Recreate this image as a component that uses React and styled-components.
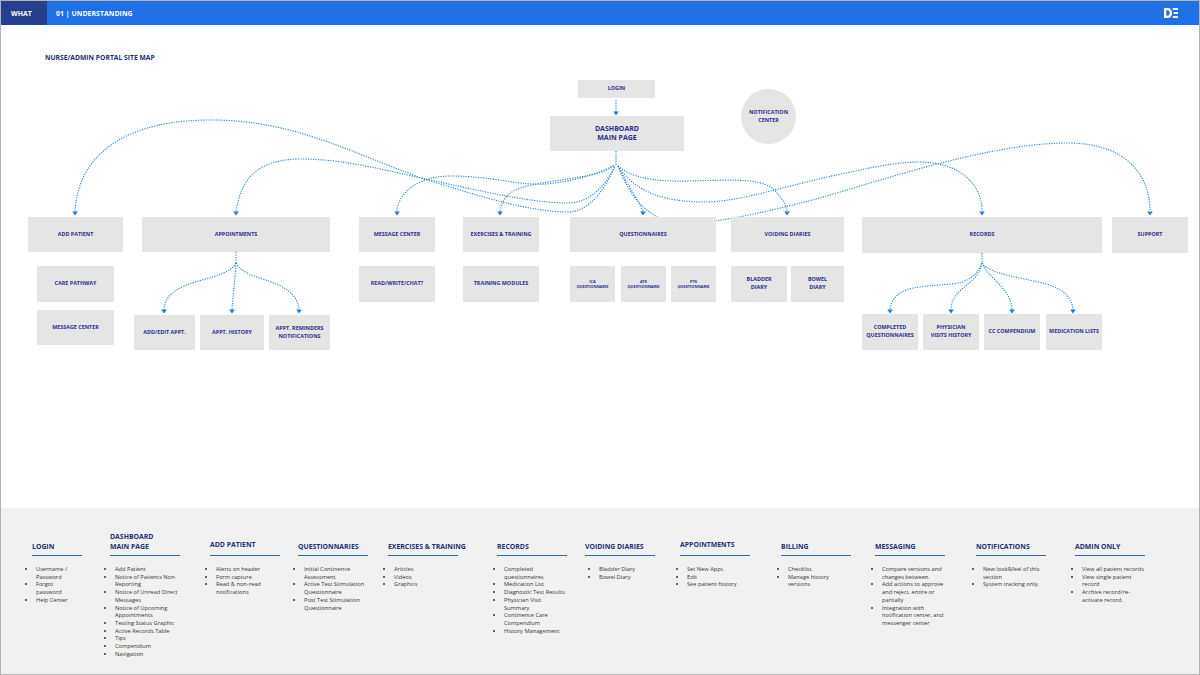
import React from "react";
import styled, { createGlobalStyle } from "styled-components";

const Global = createGlobalStyle`
  html, body { margin: 0; padding: 0; background: #fff; }
  body { font-family: "Open Sans", "Liberation Sans", sans-serif; overflow: hidden; }
  * { box-sizing: border-box; }
`;

const Page = styled.div`
  width: 1200px; height: 675px; display: flex; flex-direction: column;
  border: 1px solid #b4b4b4; background: #fff; overflow: hidden;
`;
const Header = styled.header`
  height: 24px; flex: none; display: flex; align-items: center; background: #1f70e4; color: #fff;
  font-weight: 700; font-size: 6.9px; letter-spacing: 0.05px;
`;
const Section = styled.div`
  width: 46px; height: 100%; background: #253f8f; display: flex; align-items: center; padding-left: 10px;
`;
const Crumb = styled.div` margin-left: 9px; flex: 1; `;
const Logo = styled.svg` width: 14px; height: 10px; margin-right: 21px; `;

const Canvas = styled.main` position: relative; flex: 1; `;
const Title = styled.h1`
  position: absolute; left: 44px; top: 28px; margin: 0; font-size: 6.75px; line-height: 9px;
  font-weight: 700; color: #1e2f72; white-space: nowrap;
`;
const Wires = styled.svg` position: absolute; inset: 0; width: 1198px; height: 482px; overflow: visible; `;
const Node = styled.div`
  position: absolute; display: flex; align-items: center; justify-content: center; text-align: center;
  background: #e5e5e5; color: #2a2f8c; font-weight: 700; white-space: pre-line;
  font-size: ${p => p.$size || 5.4}px; line-height: ${p => p.$lh || 7.6}px;
  padding-bottom: ${p => p.$nudge || 0}px;
  border-radius: ${p => (p.$round ? "50%" : "0")};
`;

const Footer = styled.footer`
  flex: none; height: 166px; background: #f1f1f1; display: flex; padding: 21px 0 0 31px; color: #333;
`;
const Col = styled.section` flex: none; width: ${p => p.$w}px; `;
const Head = styled.h2`
  margin: 0; width: ${p => p.$line || 70}px; height: 27px; padding-bottom: ${p => p.$lift || 3.5}px;
  display: flex; align-items: flex-end; white-space: pre;
  font-size: 6.9px; line-height: 10px; font-weight: 700; color: #1e2f72;
  border-bottom: 1.5px solid #2e6a9c;
`;
const List = styled.ul`
  margin: 10px 0 0; padding: 0 0 0 ${p => p.$indent || 6}px; list-style: disc;
  font-size: 5.7px; line-height: 7.7px; white-space: pre-line; color: #363636;
`;

const small = { $size: 3.9, $lh: 5.4 };
const nodes = [
  ["LOGIN", 577, 55, 77, 18],
  ["DASHBOARD\nMAIN PAGE", 549, 91, 134, 35, { $size: 7, $lh: 9, $nudge: 1 }],
  ["NOTIFICATION\nCENTER", 740, 64, 55, 55, { $round: true }],
  ["ADD PATIENT", 27, 192, 95, 35],
  ["APPOINTMENTS", 141, 192, 188, 35],
  ["MESSAGE CENTER", 358, 192, 76, 35],
  ["EXERCISES & TRAINING", 462, 192, 76, 35],
  ["QUESTIONNAIRES", 569, 192, 146, 35],
  ["VOIDING DIARIES", 730, 192, 113, 35],
  ["RECORDS", 861, 192, 240, 36],
  ["SUPPORT", 1111, 192, 76, 36],
  ["CARE PATHWAY", 36, 241, 77, 36],
  ["MESSAGE CENTER", 36, 285, 77, 35],
  ["READ/WRITE/CHAT?", 358, 241, 76, 36],
  ["TRAINING MODULES", 462, 241, 76, 36],
  ["ICA\nQUESTIONNARIE", 569, 241, 45, 36, small],
  ["ATS\nQUESTIONNARIE", 620, 241, 45, 36, small],
  ["PTS\nQUESTIONNARIE", 670, 241, 45, 36, small],
  ["BLADDER\nDIARY", 730, 241, 56, 36],
  ["BOWEL\nDIARY", 790, 241, 53, 36],
  ["ADD/EDIT APPT.", 133, 290, 61, 35],
  ["APPT. HISTORY", 199, 290, 64, 35],
  ["APPT. REMINDERS\nNOTIFICATIONS", 268, 290, 61, 35],
  ["COMPLETED\nQUESTIONNAIRES", 861, 289, 56, 36],
  ["PHYSICIAN\nVISITS HISTORY", 922, 289, 56, 36],
  ["CC COMPENDIUM", 983, 289, 56, 36],
  ["MEDICATION LISTS", 1045, 289, 56, 36],
];

const arrows = [
  [74, 187], [235, 187], [396, 187], [499, 187], [642, 187], [786, 187], [981, 187], [1149, 187],
  [615, 87], [163, 285], [231, 285], [298, 285], [889, 285], [950, 285], [1011, 285], [1072, 285],
];

const wires = [
  "M615 75V88",
  "M615 126V140",
  // add patient
  "M74 186C78 125 130 95 210 95C290 95 345 125 420 153C480 172 530 187 567 187C590 187 606 160 614 141",
  // appointments
  "M235 186C240 155 255 134 300 134C340 134 380 144 420 153C480 166 530 178 567 178C590 178 606 158 614 141",
  // message center
  "M396 186C398 165 420 151 450 151C490 151 520 161 545 159C575 156 600 148 613 140",
  // exercises
  "M499 186C502 170 512 164 530 160C565 153 600 152 614 140",
  // questionnaires
  "M642 186C634 170 624 155 617 141",
  // support
  "M617 141C628 170 642 185 660 194C690 205 750 190 800 178C860 163 980 118 1067 118C1125 118 1149 150 1149 186",
  // records
  "M617 141C630 160 650 176 700 177C740 178 790 158 860 145C880 140 905 137 917 137C960 137 981 160 981 186",
  // voiding
  "M617 141C630 152 650 157 690 156C730 155 765 152 776 168C782 175 785 180 786 186",
  // appointments children
  "M235 227V238",
  "M235 238C225 258 164 252 163 285",
  "M235 238C234 255 232 270 231 285",
  "M235 238C245 258 295 252 298 285",
  // records children
  "M981 228V238",
  "M981 238C975 252 965 258 950 259C920 262 892 260 889 285",
  "M981 238C978 260 950 262 950 285",
  "M981 238C988 255 1010 262 1011 285",
  "M981 238C990 250 1020 252 1045 259C1062 264 1071 272 1072 285",
];

const columns = [
  { w: 78, t: "LOGIN", line: 50, indent: 4, items: ["Username /\nPassword", "Forgot\npassword", "Help Center"] },
  { w: 100, t: "DASHBOARD\nMAIN PAGE", indent: 5, items: ["Add Patient", "Notice of Patients Non-\nReporting", "Notice of Unread Direct\nMessages", "Notice of Upcoming\nAppointments", "Testing Status Graphic", "Active Records Table", "Tips", "Compendium", "Navigation"] },
  { w: 88, t: "ADD PATIENT", lift: 5, indent: 6, items: ["Alerts on header", "Form capture", "Read & non-read\nnotifications"] },
  { w: 90, t: "QUESTIONNARIES", indent: 6, items: ["Initial Continence\nAssessment", "Active Test Stimulation\nQuestionnaire", "Post Test Stimulation\nQuestionnaire"] },
  { w: 109, t: "EXERCISES & TRAINING", indent: 6, items: ["Articles", "Videos", "Graphics"] },
  { w: 88, t: "RECORDS", indent: 7, items: ["Completed\nquestionnaires", "Medication List", "Diagnostic Test Results", "Physician Visit\nSummary", "Continence Care\nCompendium", "History Management"] },
  { w: 95, t: "VOIDING DIARIES", indent: 14, items: ["Bladder Diary", "Bowel Diary"] },
  { w: 101, t: "APPOINTMENTS", lift: 5.5, indent: 7, items: ["Set New Appt.", "Edit", "See patient history"] },
  { w: 94, t: "BILLING", indent: 7, items: ["Checklist.", "Manage history\nversions"] },
  { w: 101, t: "MESSAGING", indent: 7, items: ["Compare versions and\nchanges between.", "Add actions to approve\nand reject, entire or\npartially", "Integration with\nnotification center, and\nmessenger center"] },
  { w: 99, t: "NOTIFICATIONS", indent: 7, items: ["New look&feel of this\nsection", "System tracking only."] },
  { w: 80, t: "ADMIN ONLY", indent: 7, items: ["View all patient records", "View single patient\nrecord", "Archive record/re-\nactivate record."] },
];

export default function App() {
  return (
    <Page>
      <Global />
      <Header>
        <Section>WHAT</Section>
        <Crumb>01 | UNDERSTANDING</Crumb>
        <Logo viewBox="0 0 14 10" aria-label="DE logo">
          <path fill="#fff" fillRule="evenodd" d="M0 0H3.5C6.5 0 8 2 8 5S6.5 10 3.5 10H0ZM2.3 2.2V7.8H3.4C5 7.8 5.7 6.6 5.7 5S5 2.2 3.4 2.2Z" />
          <path fill="#fff" d="M8.6 0H14V2H8.9ZM9.6 4H14V6H9.6ZM8.9 8H14V10H8.6Z" />
        </Logo>
      </Header>
      <Canvas>
        <Title>NURSE/ADMIN PORTAL SITE MAP</Title>
        <Wires viewBox="0 0 1198 482">
          {wires.map((d, i) => (
            <path key={i} d={d} fill="none" stroke="#2a87d2" strokeWidth="1.15" strokeDasharray="1.2 1.3" />
          ))}
          {arrows.map(([x, y], i) => (
            <path key={i} d={`M${x - 2.8} ${y - 0.5}H${x + 2.8}L${x} ${y + 3.5}Z`} fill="#1c7fd6" />
          ))}
        </Wires>
        {nodes.map(([label, x, y, w, h, extra]) => (
          <Node key={label + x} style={{ left: x, top: y, width: w, height: h }} {...extra}>{label}</Node>
        ))}
      </Canvas>
      <Footer>
        {columns.map(c => (
          <Col key={c.t} $w={c.w}>
            <Head $line={c.line} $lift={c.lift}>{c.t}</Head>
            <List $indent={c.indent}>
              {c.items.map(it => <li key={it}>{it}</li>)}
            </List>
          </Col>
        ))}
      </Footer>
    </Page>
  );
}
